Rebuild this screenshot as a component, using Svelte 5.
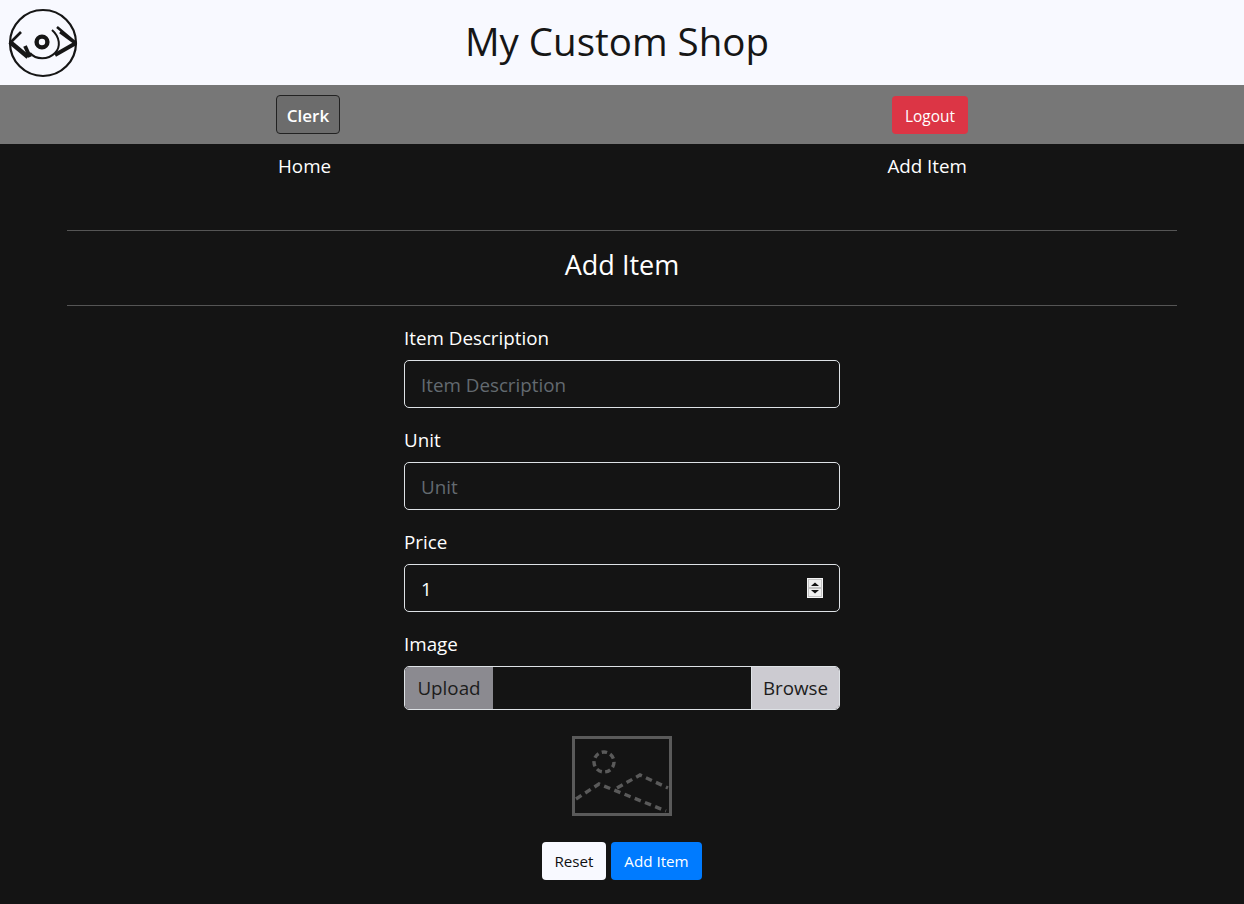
<script>
  const fields = [
    { label: 'Item Description', type: 'text', placeholder: 'Item Description' },
    { label: 'Unit', type: 'text', placeholder: 'Unit' },
    { label: 'Price', type: 'number', value: '1' }
  ];
</script>

<div class="page">
  <header class="top">
    <svg class="logo" viewBox="0 0 70 70" width="70" height="70" aria-hidden="true">
      <circle cx="35" cy="35" r="33" fill="none" stroke="#161616" stroke-width="2.2" />
      <circle cx="34" cy="34" r="5.4" fill="none" stroke="#161616" stroke-width="4.4" />
      <path d="M44 22C52 29 53 39 47 45C40 52 28 52 22 45" fill="none" stroke="#161616" stroke-width="2" />
      <path d="M13 24L2 35" fill="none" stroke="#161616" stroke-width="2.6" />
      <path d="M2 34L20 49" fill="none" stroke="#161616" stroke-width="4.6" />
      <path d="M17 38L22 49" fill="none" stroke="#161616" stroke-width="3.8" />
      <path d="M49 19L68 35" fill="none" stroke="#161616" stroke-width="2.6" />
      <path d="M52 24L67 35" fill="none" stroke="#161616" stroke-width="2.8" />
      <path d="M68 35L47 47" fill="none" stroke="#161616" stroke-width="4" />
    </svg>
    <h1>My Custom Shop</h1>
  </header>

  <nav class="bar">
    <button class="clerk">Clerk</button>
    <button class="logout">Logout</button>
  </nav>

  <div class="links">
    <a href="#home">Home</a>
    <a href="#add">Add Item</a>
  </div>

  <main class="content">
    <hr />
    <h2>Add Item</h2>
    <hr />
    <form class="form">
      {#each fields as f}
        <div class="group">
          <label for={f.label}>{f.label}</label>
          <div class="field">
            <input id={f.label} type={f.type} placeholder={f.placeholder} value={f.value ?? ''} />
            {#if f.type === 'number'}
              <svg class="spin" viewBox="0 0 16 20" width="16" height="20" aria-hidden="true">
                <rect width="16" height="20" fill="#f4f4f4" />
                <rect x="1.5" y="1.5" width="13" height="17" fill="#efefef" stroke="#c4c4c4" />
                <path d="M1 10H15" stroke="#c4c4c4" stroke-width="2" />
                <path d="M8 4.5L12 8H4Z" fill="#111" />
                <path d="M8 15.5L12 12H4Z" fill="#111" />
              </svg>
            {/if}
          </div>
        </div>
      {/each}
      <div class="group">
        <span class="label">Image</span>
        <div class="file">
          <span class="upload">Upload</span>
          <span class="name"></span>
          <span class="browse">Browse</span>
        </div>
      </div>
      <div class="preview">
        <svg viewBox="0 0 100 80" width="100" height="80" aria-hidden="true">
          <rect x="1.5" y="1.5" width="97" height="77" fill="none" stroke="#5a5a5a" stroke-width="3" />
          <circle cx="32" cy="26" r="10" fill="none" stroke="#5a5a5a" stroke-width="3.4" stroke-dasharray="5.5 3.4" />
          <path d="M4 63L27 48L94 75" fill="none" stroke="#5a5a5a" stroke-width="3.4" stroke-dasharray="6.5 4.5" />
          <path d="M45 52L68 39L96 52" fill="none" stroke="#5a5a5a" stroke-width="3.4" stroke-dasharray="6.5 4.5" />
        </svg>
      </div>
      <div class="actions">
        <button type="button" class="reset">Reset</button>
        <button type="button" class="add">Add Item</button>
      </div>
    </form>
  </main>
</div>

<style>
  :global(body) {
    margin: 0;
    background: #141414;
  }
  .page {
    font-family: "Open Sans", "Noto Sans", sans-serif;
    color: #fff;
    min-height: 904px;
    background: #141414;
  }
  .top {
    height: 85px;
    background: #f8f9ff;
    position: relative;
    display: flex;
    align-items: center;
    justify-content: center;
  }
  .logo {
    position: absolute;
    left: 8px;
    top: 8px;
  }
  h1 {
    margin: 0 10px 3px 0;
    font-size: 38.5px;
    font-weight: 400;
    line-height: 1.2;
    color: #161616;
  }
  .bar {
    height: 59px;
    box-sizing: border-box;
    background: #777;
    display: flex;
    justify-content: space-between;
    align-items: center;
    padding: 0 276px;
  }
  button {
    font-family: inherit;
    cursor: pointer;
  }
  .clerk {
    width: 64px;
    height: 39px;
    padding: 2px 0 0;
    background: #6c6c6c;
    border: 1px solid #222;
    border-radius: 4px;
    color: #fff;
    font-size: 17px;
    font-weight: 600;
  }
  .logout {
    width: 76px;
    height: 38px;
    padding: 3px 0 0;
    background: #dc3545;
    border: 0;
    border-radius: 4px;
    color: #fff;
    font-size: 15.4px;
  }
  .links {
    display: flex;
    justify-content: space-between;
    padding: 9px 277px 0 278px;
    font-size: 18.8px;
    line-height: 27px;
  }
  .links a {
    color: #fff;
    text-decoration: none;
  }
  .content {
    padding: 0 67px;
    margin-top: 50px;
  }
  hr {
    margin: 0;
    border: 0;
    border-top: 1px solid #555;
  }
  h2 {
    margin: 0;
    height: 74px;
    line-height: 68px;
    text-align: center;
    font-size: 27px;
    font-weight: 400;
  }
  .form {
    width: 436px;
    margin: 18px auto 0;
    display: flex;
    flex-direction: column;
  }
  .group {
    margin-bottom: 18px;
  }
  .field {
    position: relative;
  }
  label,
  .label {
    display: block;
    font-size: 18.8px;
    line-height: 28px;
    margin-bottom: 8px;
  }
  input {
    display: block;
    width: 100%;
    height: 48px;
    box-sizing: border-box;
    padding: 10px 16px 8px;
    background: #141414;
    border: 1px solid #dee2e6;
    border-radius: 5px;
    color: #fff;
    font-family: inherit;
    font-size: 18.8px;
    outline: none;
    appearance: textfield;
  }
  input::placeholder {
    color: #636a70;
    opacity: 1;
  }
  input::-webkit-inner-spin-button {
    appearance: none;
    margin: 0;
  }
  .spin {
    position: absolute;
    right: 17px;
    top: 14px;
  }
  .file {
    display: flex;
    height: 44px;
    box-sizing: border-box;
    border: 1px solid #dee2e6;
    border-radius: 5px;
    overflow: hidden;
    font-size: 18.8px;
    line-height: 42px;
    color: #1c1c1c;
  }
  .upload {
    width: 88px;
    text-align: center;
    background: #8b8a90;
  }
  .name {
    flex: 1;
    background: #141414;
  }
  .browse {
    width: 87px;
    text-align: center;
    background: #cccbd1;
    border-left: 1px solid #dee2e6;
  }
  .preview {
    display: flex;
    justify-content: center;
    margin-top: 8px;
    height: 80px;
  }
  .actions {
    display: flex;
    justify-content: center;
    gap: 5px;
    margin-top: 26px;
  }
  .actions button {
    height: 38px;
    padding: 0;
    border: 0;
    border-radius: 4px;
    font-size: 15.2px;
  }
  .reset {
    width: 64px;
    background: #f8f9ff;
    color: #111;
  }
  .add {
    width: 91px;
    background: #007bff;
    color: #fff;
  }
</style>
